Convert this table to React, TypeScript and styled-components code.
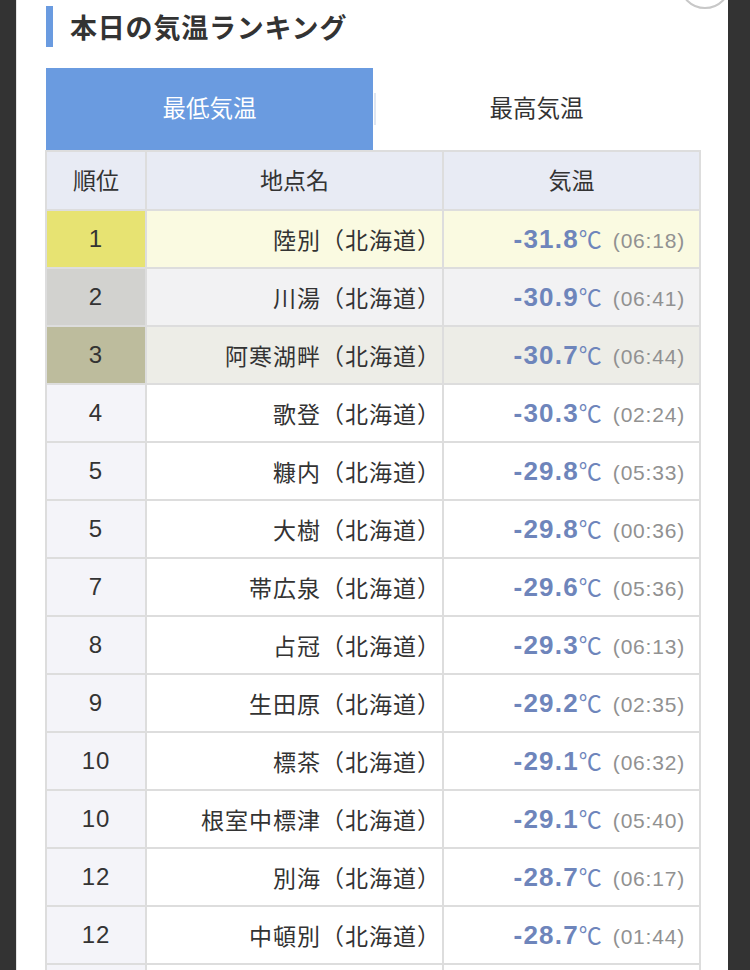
import React, { useState } from "react";
import styled, { createGlobalStyle } from "styled-components";

const GlobalStyle = createGlobalStyle`
  html, body {
    margin: 0;
    padding: 0;
    background: #333333;
    font-family: "Liberation Sans", "Noto Sans CJK JP", sans-serif;
    color: #333;
  }
`;

type Rank = {
  rank: number;
  name: string;
  temp: string;
  time: string;
};

const ranks: Rank[] = [
  { rank: 1, name: "陸別", temp: "-31.8", time: "06:18" },
  { rank: 2, name: "川湯", temp: "-30.9", time: "06:41" },
  { rank: 3, name: "阿寒湖畔", temp: "-30.7", time: "06:44" },
  { rank: 4, name: "歌登", temp: "-30.3", time: "02:24" },
  { rank: 5, name: "糠内", temp: "-29.8", time: "05:33" },
  { rank: 5, name: "大樹", temp: "-29.8", time: "00:36" },
  { rank: 7, name: "帯広泉", temp: "-29.6", time: "05:36" },
  { rank: 8, name: "占冠", temp: "-29.3", time: "06:13" },
  { rank: 9, name: "生田原", temp: "-29.2", time: "02:35" },
  { rank: 10, name: "標茶", temp: "-29.1", time: "06:32" },
  { rank: 10, name: "根室中標津", temp: "-29.1", time: "05:40" },
  { rank: 12, name: "別海", temp: "-28.7", time: "06:17" },
  { rank: 12, name: "中頓別", temp: "-28.7", time: "01:44" },
  { rank: 14, name: "上札内", temp: "-28.5", time: "05:50" },
];

// 1〜3位は順位セルと行の色を変える
const medal: Record<number, { rank: string; row: string }> = {
  1: { rank: "#e7e372", row: "#fafae1" },
  2: { rank: "#d2d2cf", row: "#f2f2f3" },
  3: { rank: "#bdbc9d", row: "#ededE7" },
};

function App() {
  const [tab, setTab] = useState<"min" | "max">("min");

  return (
    <>
      <GlobalStyle />
      <Panel>
        <CloseButton aria-label="閉じる" />
        <Heading>本日の気温ランキング</Heading>

        <Tabs>
          <Tab $active={tab === "min"} onClick={() => setTab("min")}>
            最低気温
          </Tab>
          <Tab $active={tab === "max"} $divider onClick={() => setTab("max")}>
            最高気温
          </Tab>
        </Tabs>

        <Table>
          <colgroup>
            <col style={{ width: 100 }} />
            <col style={{ width: 297 }} />
            <col />
          </colgroup>
          <thead>
            <tr>
              <HeadCell>順位</HeadCell>
              <HeadCell>地点名</HeadCell>
              <HeadCell>気温</HeadCell>
            </tr>
          </thead>
          <tbody>
            {ranks.map((r, i) => {
              const m = medal[r.rank];
              return (
                <Row key={i}>
                  <RankCell $bg={m ? m.rank : "#f4f4f9"}>{r.rank}</RankCell>
                  <NameCell $bg={m ? m.row : "#fff"}>
                    {r.name}（北海道）
                  </NameCell>
                  <TempCell $bg={m ? m.row : "#fff"}>
                    <Temp>{r.temp}</Temp>
                    <Unit>℃</Unit>
                    <Time>({r.time})</Time>
                  </TempCell>
                </Row>
              );
            })}
          </tbody>
        </Table>
      </Panel>
    </>
  );
}

const Panel = styled.div`
  position: relative;
  margin-left: 16px;
  width: 712px;
  min-height: 970px;
  box-sizing: border-box;
  background: #fff;
  border-left: 1px solid #e4e4e4;
  padding: 6px 27px 0 29px;
  overflow: hidden;
`;

const CloseButton = styled.div`
  position: absolute;
  right: -3px;
  top: -43px;
  width: 48px;
  height: 48px;
  border-radius: 50%;
  background: #fff;
  border: 2px solid #c8c8c8;
`;

const Heading = styled.h2`
  margin: 0;
  height: 41px;
  display: flex;
  align-items: center;
  border-left: 7px solid #6a9be0;
  padding-left: 17px;
  font-family: "Noto Sans CJK JP", sans-serif;
  font-size: 27px;
  font-weight: 700;
  color: #333;
  letter-spacing: 0.8px;
`;

const Tabs = styled.div`
  display: flex;
  margin-top: 21px;
  width: 654px;
`;

const Tab = styled.button<{ $active?: boolean; $divider?: boolean }>`
  position: relative;
  flex: 1;
  height: 82px;
  border: none;
  padding: 0 0 4px;
  cursor: pointer;
  background: ${(p) => (p.$active ? "#6a9be0" : "#fff")};
  color: ${(p) => (p.$active ? "#fff" : "#333")};
  font-family: "Noto Sans CJK JP", sans-serif;
  font-size: 23.5px;
  font-weight: 400;

  &::before {
    content: "";
    display: ${(p) => (p.$divider ? "block" : "none")};
    position: absolute;
    left: 1px;
    top: 25px;
    height: 32px;
    width: 2px;
    background: #dfe6f1;
  }
`;

const Table = styled.table`
  width: 656px;
  border-collapse: collapse;
  table-layout: fixed;
  border: 2px solid #dddddd;
  margin-left: -1px;
`;

const Row = styled.tr`
  height: 58px;
`;

const Cell = styled.td<{ $bg?: string }>`
  height: 54px;
  padding: 0;
  line-height: 28px;
  border: 2px solid #dddddd;
  background: ${(p) => p.$bg || "#fff"};
  font-family: "Liberation Sans", "Noto Sans CJK JP", sans-serif;
  font-size: 22px;
  color: #333;
  overflow: hidden;
`;

const HeadCell = styled.th`
  height: 53px;
  padding: 0 0 4px;
  line-height: 28px;
  border: 2px solid #dddddd;
  background: #e8ebf4;
  font-family: "Noto Sans CJK JP", sans-serif;
  font-size: 23px;
  font-weight: 400;
  color: #333;
  text-align: center;
`;

const RankCell = styled(Cell)`
  text-align: center;
  font-size: 24px;
  letter-spacing: 1px;
  color: #333;
`;

const NameCell = styled(Cell)`
  text-align: right;
  padding-right: 1px;
  font-family: "Noto Sans CJK JP", sans-serif;
  font-size: 23px;
  letter-spacing: 1px;
  white-space: nowrap;
`;

const TempCell = styled(Cell)`
  text-align: right;
  padding-right: 14px;
  white-space: nowrap;
`;

const Temp = styled.span`
  font-size: 26px;
  font-weight: 700;
  line-height: 28px;
  color: #6e85bb;
  letter-spacing: 1.2px;
`;

const Unit = styled.span`
  font-family: "Noto Sans CJK JP", sans-serif;
  font-size: 23px;
  line-height: 28px;
  color: #6e85bb;
`;

const Time = styled.span`
  font-size: 21px;
  line-height: 28px;
  color: #919191;
  margin-left: 11px;
  letter-spacing: 0.8px;
`;

export default App;
